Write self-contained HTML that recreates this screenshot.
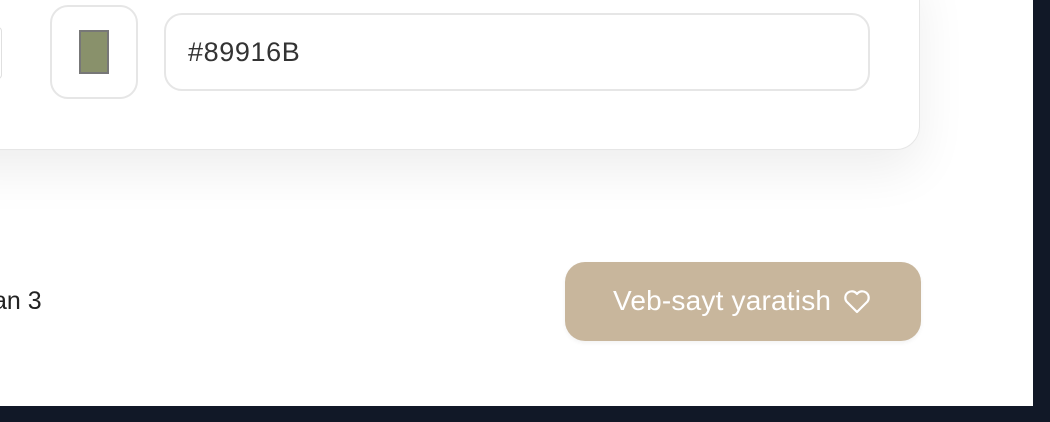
<!DOCTYPE html>
<html><head><style>
html,body{margin:0;padding:0;width:1050px;height:422px;overflow:hidden;background:#111827;font-family:"Liberation Sans",sans-serif;}
.page{position:absolute;left:0;top:0;width:1033px;height:406px;background:#fff;overflow:hidden;}
.card{position:absolute;left:-60px;top:-40px;width:978px;height:188px;background:#fff;border:1px solid #e6e6e6;border-radius:24px;box-shadow:0 20px 50px rgba(0,0,0,0.07);}
.sw{position:absolute;left:50px;top:5px;border:2px solid #e6e6e6;border-radius:18px;background:#fff;box-sizing:border-box;width:88px;height:94px;}
.sw i{position:absolute;left:27px;top:23px;width:30px;height:44px;box-sizing:border-box;background:#89916B;border:2px solid #777;}
.inp{position:absolute;left:164px;top:13px;width:706px;height:78px;box-sizing:border-box;border:2px solid #e6e6e6;border-radius:18px;background:#fff;}
.inp span{position:absolute;left:22px;top:22px;font-size:27px;color:#333;letter-spacing:0.6px;}
.edge{position:absolute;left:-10px;top:27px;width:11px;height:50px;border:1px solid #e0e0e0;border-left:none;border-radius:0 4px 4px 0;}
.lbl{position:absolute;left:-7px;top:287px;font-size:25px;color:#222;}
.btn{position:absolute;left:565px;top:262px;width:356px;height:79px;background:#C8B69C;border-radius:20px;box-shadow:0 2px 4px rgba(0,0,0,0.05);}
.btn span{position:absolute;left:48px;top:23px;font-size:28px;color:#fff;letter-spacing:0.2px;}
.btn svg{position:absolute;left:277px;top:27px;}
</style></head><body>
<div class="page">
<div class="card"></div>
<div class="edge"></div>
<div class="sw"><i></i></div>
<div class="inp"><span>#89916B</span></div>
<div class="lbl">an 3</div>
<div class="btn"><span>Veb-sayt yaratish</span>
<svg width="30" height="26" viewBox="0 0 30 26"><path d="M15 23 L4.5 12.5 A6 6 0 0 1 15 5 A6 6 0 0 1 25.5 12.5 Z" fill="none" stroke="#fff" stroke-width="2.2" stroke-linejoin="round"/></svg>
</div>
</div>
</body></html>
